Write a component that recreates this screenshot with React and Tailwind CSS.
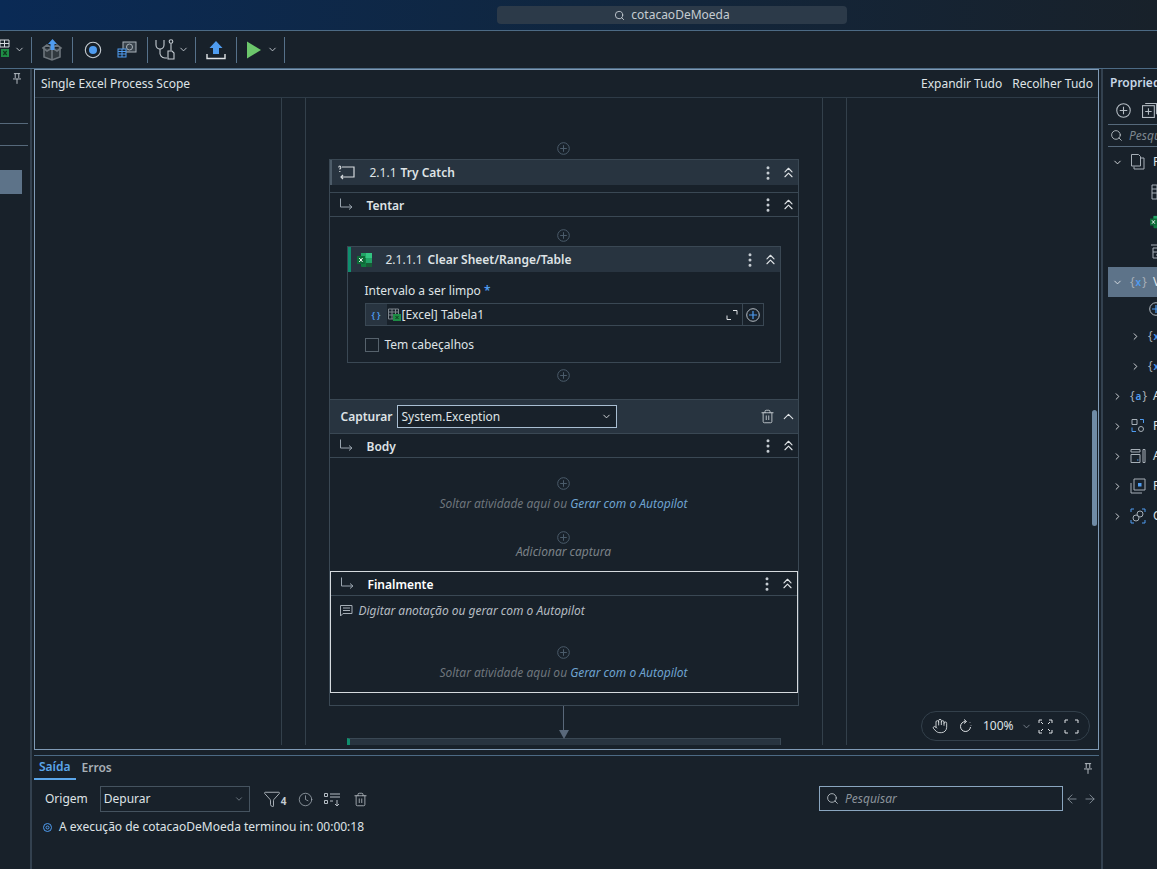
import React from "react";
import { ChevronDown, ChevronRight, ChevronsUp, ChevronUp, EllipsisVertical, Search, Trash2, Hand, ArrowLeft, ArrowRight, Clock, Funnel } from "lucide-react";

function PlusDot({ className = "" }) {
  return (
    <svg width="13" height="13" viewBox="0 0 13 13" fill="none" stroke="#4b5c6b" strokeWidth="1" className={className}>
      <circle cx="6.5" cy="6.5" r="5.8" />
      <path d="M6.5 3.2v6.6M3.2 6.5h6.6" />
    </svg>
  );
}

function PinIcon({ className = "" }) {
  return (
    <svg width="8" height="11" viewBox="0 0 9 12" fill="none" stroke="#c5ccd2" className={className}>
      <path d="M1 .5h7M2.500 .5v5M6.500 .5v5M0 6.500h9M4.500 6.500V12" />
    </svg>
  );
}

function ExcelIcon({ size = 16 }) {
  return (
    <svg width={size} height={size} viewBox="0 0 16 16">
      <rect x="4" y="1" width="11" height="14" rx="1" fill="#107c41" />
      <rect x="9" y="1" width="6" height="5" fill="#33c481" />
      <rect x="9" y="6" width="6" height="5" fill="#21a366" />
      <rect x="4" y="1" width="5" height="5" fill="#21a366" />
      <rect x="9" y="11" width="6" height="4" fill="#185c37" />
      <rect x="0" y="4" width="8" height="8" fill="#0e6b38" />
      <path d="M2.2 6l3.4 4M5.6 6l-3.4 4" stroke="#fff" strokeWidth="1" />
    </svg>
  );
}

function BranchIcon() {
  return (
    <svg width="14" height="13" viewBox="0 0 14 13" fill="none" stroke="#9aa5af" strokeWidth="1" className="shrink-0">
      <path d="M0.5 0.5v8.5h11M9 6.5l3 2.5-3 2.5" />
    </svg>
  );
}

function RowActions() {
  return (
    <div className="ml-auto flex items-center gap-[3px]">
      <EllipsisVertical size={18} strokeWidth={2} className="text-[#c5ccd2]" />
      <ChevronsUp size={17} strokeWidth={1.6} className="text-[#dfe3e6]" />
    </div>
  );
}

function SectionRow({ title, white }) {
  return (
    <div className="flex h-6 shrink-0 items-center border-b border-[#3a4854] pl-[10px] pr-[1px]">
      <BranchIcon />
      <span className={`ml-[13px] pt-[2px] font-semibold ${white ? "text-white" : "text-[#dfe3e6]"}`}>{title}</span>
      <RowActions />
    </div>
  );
}

function DropHint() {
  return (
    <div className="flex flex-col items-center gap-[6px] italic text-[#6e767d]">
      <PlusDot />
      <div>
        Soltar atividade aqui ou <span className="text-[#6ea3d0]">Gerar com o Autopilot</span>
      </div>
    </div>
  );
}

function Toolbar() {
  return (
    <div className="flex h-[37px] shrink-0 items-center">
      <svg width="26" height="26" viewBox="0 0 26 26" fill="none" className="-ml-[2px]">
        <path d="M2 3h9v7H2zM6.500 3v7M2 6.500h9" stroke="#d5dade" strokeWidth="1" />
        <rect x="3" y="12" width="8" height="8" fill="#1e8c45" />
        <path d="M5.300 14l3.400 4M8.700 14l-3.400 4" stroke="#10331d" strokeWidth="1.2" />
      </svg>
      <ChevronDown size={11} strokeWidth={2} className="text-[#c5ccd2] -ml-[10px] mr-[6px]" />
      <div className="h-[26px] w-px bg-[#56718a]" />
      <svg width="24" height="24" viewBox="0 0 24 24" fill="none" className="mx-[8px]">
        <path d="M4 10v9l8 3 8-3v-9" stroke="#6d757c" strokeWidth="1.6" fill="#31393f" />
        <path d="M3 10l4-3 5 3 5-3 4 3-4 3-5-3-5 3zM12 12v10" stroke="#6d757c" strokeWidth="1.6" />
        <path d="M10.500 12V6H8l4.500-5L17 6h-2.500v6z" fill="#4f9cf0" />
      </svg>
      <div className="h-[26px] w-px bg-[#56718a]" />
      <svg width="18" height="18" viewBox="0 0 18 18" fill="none" className="ml-[11px]">
        <circle cx="9" cy="9" r="7.7" stroke="#c5ccd2" strokeWidth="1.1" />
        <circle cx="9" cy="9" r="4" fill="#4f9cf0" />
      </svg>
      <svg width="20" height="18" viewBox="0 0 20 18" fill="none" className="ml-[15px]">
        <rect x="6" y="1" width="13" height="10" fill="#39434c" stroke="#aab3ba" />
        <circle cx="12.5" cy="6" r="3" stroke="#aab3ba" />
        <rect x="1" y="8" width="8" height="8" fill="#18212a" stroke="#4f9cf0" />
        <path d="M1 10.500h8M1 13h8M5 8v8" stroke="#4f9cf0" />
      </svg>
      <div className="ml-[10px] h-[26px] w-px bg-[#56718a]" />
      <svg width="24" height="22" viewBox="0 0 24 22" fill="none" className="ml-[6px]" stroke="#c5ccd2" strokeWidth="1.1">
        <path d="M2 1v5a4 4 0 0 0 8 0V1" />
        <path d="M6 10v3a5 5 0 0 0 5 6h2" />
        <circle cx="17" cy="2.500" r="1.800" />
        <path d="M17 4.500v7" />
        <path d="M14 12h4l2 2v6h-6z" />
      </svg>
      <ChevronDown size={11} strokeWidth={2} className="text-[#c5ccd2]" />
      <div className="ml-[6px] h-[26px] w-px bg-[#56718a]" />
      <svg width="20" height="20" viewBox="0 0 20 20" fill="none" className="ml-[10px]">
        <path d="M10 1l6.500 7H13v6H7V8H3.500z" fill="#4f9cf0" />
        <path d="M1 14v4.500h18V14" stroke="#dfe3e6" strokeWidth="1.400" />
      </svg>
      <div className="ml-[10px] h-[26px] w-px bg-[#56718a]" />
      <svg width="16" height="20" viewBox="0 0 16 20" className="ml-[9px]">
        <path d="M1 1.500L15 10 1 18.500z" fill="#6cc76c" />
      </svg>
      <ChevronDown size={11} strokeWidth={2} className="text-[#c5ccd2] ml-[5px]" />
      <div className="ml-[6px] h-[26px] w-px bg-[#56718a]" />
    </div>
  );
}

function TreeRow({ indent, chevron, icon, label, active }) {
  return (
    <div className={`flex h-[30px] items-center whitespace-nowrap ${active ? "bg-[#5d7389]" : ""}`} style={{ paddingLeft: indent }}>
      <span className="flex w-[18px] shrink-0 justify-start">
        {chevron === "down" && <ChevronDown size={11} strokeWidth={2} className="text-[#dfe3e6]" />}
        {chevron === "right" && <ChevronRight size={11} strokeWidth={2} className="text-[#dfe3e6]" />}
      </span>
      <span className="flex w-[23px] shrink-0 items-center">{icon}</span>
      <span className="text-[#dfe3e6]">{label}</span>
    </div>
  );
}

function Braces({ letter }) {
  return (
    <span className="flex items-center gap-[1px] text-[12px] leading-none text-[#a6afb7]">
      {"{"}<span className="text-[10px] font-semibold text-[#4f9cf0]">{letter}</span>{"}"}
    </span>
  );
}

function Outline({ children }) {
  return (
    <svg width="16" height="16" viewBox="0 0 16 16" fill="none" stroke="#a6afb7" strokeWidth="1">
      {children}
    </svg>
  );
}

function RightPanel() {
  return (
    <div className="flex w-[54px] shrink-0 flex-col overflow-hidden whitespace-nowrap">
      <div className="flex h-[27px] w-[200px] shrink-0 items-center pl-[7px] font-semibold text-[#c6d6e6]">Propriedades do projeto</div>
      <div className="flex h-[28px] w-[200px] shrink-0 items-center gap-[11px] pl-[13px]">
        <svg width="15" height="15" viewBox="0 0 14 14" fill="none" stroke="#b5bdc4">
          <circle cx="7" cy="7" r="6.300" /><path d="M7 3.500v7M3.500 7h7" />
        </svg>
        <svg width="15" height="15" viewBox="0 0 14 14" fill="none" stroke="#b5bdc4">
          <rect x="0.500" y="2.500" width="11" height="11" /><path d="M3 .5h10.500v10M6 5v6M3 8h6" />
        </svg>
      </div>
      <div className="ml-[5px] flex h-[23px] w-[200px] shrink-0 items-center gap-[6px] border-y border-[#56697b] pl-[2px]">
        <Search size={13} strokeWidth={1.500} className="text-[#c5ccd2]" />
        <span className="italic text-[#7d868e]">Pesquisar</span>
      </div>
      <div className="ml-[5px] w-[200px]">
        <TreeRow indent={4} chevron="down" label="Projeto" icon={<Outline><path d="M1.500 .5h7l2 2v9.500h-9zM4 12.500V15h10V4h-3" /></Outline>} />
        <div className="flex h-[30px] items-center pl-[43px]"><Outline><path d="M1 1h10v14H1zM1 5h10M1 9h10M6 1v14" /></Outline></div>
        <div className="flex h-[30px] items-center pl-[42px]"><ExcelIcon size={14} /></div>
        <div className="flex h-[30px] items-center pl-[42px]"><Outline><path d="M1 1h10v2M3 4h10v10H3zM3 8h10M6 11h5" /></Outline></div>
        <TreeRow indent={4} chevron="down" label="Variáveis" active icon={<Braces letter="x" />} />
        <div className="flex h-[24px] items-center pl-[41px]">
          <svg width="14" height="14" viewBox="0 0 14 14" fill="none">
            <circle cx="7" cy="7" r="6.300" stroke="#b5bdc4" /><path d="M7 3v8M3 7h8" stroke="#4f9cf0" strokeWidth="1.200" />
          </svg>
        </div>
        <TreeRow indent={22} chevron="right" label="" icon={<Braces letter="x" />} />
        <TreeRow indent={22} chevron="right" label="" icon={<Braces letter="x" />} />
        <TreeRow indent={4} chevron="right" label="Argumentos" icon={<Braces letter="a" />} />
        <TreeRow indent={4} chevron="right" label="Pacotes" icon={<Outline><path d="M2 1.500h5v5H2z" /><circle cx="11" cy="11" r="2.500" /><path d="M10 1.500h3.500V5M2 9.500v4h4" stroke="#4f9cf0" /></Outline>} />
        <TreeRow indent={4} chevron="right" label="Ativos" icon={<Outline><path d="M1 1.500h9v2.500H1zM1 6.500h9v8H1zM13 1.500h2v13h-2z" /><path d="M7 12h1.500" stroke="#4f9cf0" /></Outline>} />
        <TreeRow indent={4} chevron="right" label="Recursos" icon={<Outline><path d="M4 1h11v11H4zM1 5v10h11" /><rect x="8" y="5" width="3.500" height="3.500" fill="#4f9cf0" stroke="none" /></Outline>} />
        <TreeRow indent={4} chevron="right" label="Objetos" icon={<Outline><circle cx="6" cy="10" r="3" /><circle cx="10" cy="6" r="3" /><path d="M1 4V1h3M12 1h3v3M1 12v3h3M15 12v3h-3" stroke="#4f9cf0" /></Outline>} />
      </div>
    </div>
  );
}

export default function App() {
  return (
    <div className="flex h-[869px] w-[1157px] flex-col overflow-hidden bg-[#18212a] font-['Noto_Sans',sans-serif] text-[12px] leading-[16px] text-[#dfe3e6]">
      {/* title bar */}
      <div className="flex h-[31px] shrink-0 items-center justify-center border-b border-[#4c6a84] bg-gradient-to-r from-[#0a2a55] via-[#10263f] to-[#18212a] pl-[497px] pr-[310px]">
        <div className="flex h-[18px] w-full items-center justify-center gap-[6px] rounded-[4px] bg-[#2c3a49] text-[#c5ccd2]">
          <Search size={11} strokeWidth={2} />
          cotacaoDeMoeda
        </div>
      </div>
      <Toolbar />
      <div className="flex min-h-0 flex-1 border-t border-[#4c6a84]">
        {/* left panel */}
        <div className="flex w-[32px] shrink-0 flex-col border-r-2 border-[#33414f]">
          <div className="flex h-[21px] justify-end pr-[9px] pt-[4px]">
            <PinIcon />
          </div>
          <div className="mr-[2px] mt-[33px] h-[23px] border-y border-[#56697b]" />
          <div className="mr-[8px] mt-[24px] h-[24px] bg-[#5d7389]" />
        </div>
        <div className="flex min-w-0 flex-1 flex-col pl-[2px]">
          {/* designer */}
          <div className="relative flex h-[681px] shrink-0 flex-col border border-[#7f9ab5] pb-[4px]">
            <div className="flex h-[28px] shrink-0 items-center border-b border-[#2e3b47] pl-[6px] pr-[5px]">
              <span>Single Excel Process Scope</span>
              <span className="ml-auto mr-[10px]">Expandir Tudo</span>
              <span>Recolher Tudo</span>
            </div>
            <div className="flex min-h-0 flex-1 justify-center overflow-hidden pr-[6px]">
              <div className="w-[566px] border-x border-[#33404b] px-[23px]">
                <div className="h-full border-x border-[#33404b] px-[23px] pt-[44px]">
                  <div className="flex justify-center"><PlusDot /></div>
                  <div className="mt-[4px] w-[470px] border border-[#3a4854] pb-[12px]">
                    <div className="flex h-[25px] items-center border-l-2 border-[#4d5c69] bg-[#283440] pl-[6px] pr-[1px]">
                      <svg width="18" height="16" viewBox="0 0 18 16" fill="none" stroke="#d5dade" strokeWidth="1.200">
                        <path d="M4 2h12v10H3M5 10l-2 2 2 2" />
                        <path d="M0.800 2.500c0-2 2-2 2 0 0 1-1 1-1 2M1.800 6v1" />
                      </svg>
                      <span className="ml-[14px]">2.1.1</span>
                      <span className="ml-[4px] font-semibold">Try Catch</span>
                      <RowActions />
                    </div>
                    <div className="mt-[7px] border-t border-[#3a4854]">
                      <SectionRow title="Tentar" />
                    </div>
                    <div className="flex h-[183px] flex-col items-center border-b border-[#3a4854] pt-[12px]">
                      <PlusDot />
                      <div className="mt-[4px] w-[434px] border border-[#3a4854]">
                        <div className="flex h-[25px] items-center border-l-[3px] border-[#0f8f6e] bg-[#283440] pl-[6px] pr-[1px]">
                          <ExcelIcon />
                          <span className="ml-[13px]">2.1.1.1</span>
                          <span className="ml-[5px] font-semibold">Clear Sheet/Range/Table</span>
                          <RowActions />
                        </div>
                        <div className="pb-[9px] pl-[17px] pr-[16px] pt-[11px]">
                          <div>Intervalo a ser limpo <span className="font-semibold text-[#4f9cf0]">*</span></div>
                          <div className="mt-[4px] flex h-[23px] items-stretch border border-[#3a4854]">
                            <div className="flex w-[21px] items-center justify-center gap-[2px] bg-[#283440] text-[9px] font-semibold text-[#4f9cf0]">
                              <span>{"{"}</span><span>{"}"}</span>
                            </div>
                            <div className="flex flex-1 items-center pl-[1px] pt-[1px]">
                              <svg width="14" height="14" viewBox="0 0 14 14" fill="none">
                                <path d="M0.500 1h10v10h-10zM0.500 4h10M0.500 7h10M4 1v10M7.500 1v10" stroke="#7c858c" />
                                <rect x="5" y="6" width="8" height="7" fill="#1e8c45" />
                                <path d="M7.500 8l3 3M10.500 8l-3 3" stroke="#10331d" />
                              </svg>
                              <span>[Excel] Tabela1</span>
                            </div>
                            <svg width="12" height="12" viewBox="0 0 12 12" fill="none" stroke="#dfe3e6" className="mr-[4px] self-center">
                              <path d="M7 1.500h4v4M1 6.500v4h4" />
                            </svg>
                            <div className="flex w-[21px] items-center justify-center border-l border-[#3a4854]">
                              <svg width="14" height="14" viewBox="0 0 14 14" fill="none">
                                <circle cx="7" cy="7" r="6.300" stroke="#b5bdc4" />
                                <path d="M7 3v8M3 7h8" stroke="#4f9cf0" strokeWidth="1.200" />
                              </svg>
                            </div>
                          </div>
                          <label className="mt-[11px] flex items-center gap-[6px]">
                            <span className="h-[14px] w-[14px] border border-[#56626c]" />
                            Tem cabeçalhos
                          </label>
                        </div>
                      </div>
                      <PlusDot className="mt-[6px]" />
                    </div>
                    <div className="flex h-[34px] items-center border-b border-[#3a4854] bg-[#283440] pl-[11px] pr-[1px]">
                      <span className="font-semibold">Capturar</span>
                      <div className="ml-[5px] flex h-[23px] w-[220px] items-center border border-[#a9bed2] bg-[#18212a] pl-[3px] pr-[4px]">
                        System.Exception
                        <ChevronDown size={11} strokeWidth={2} className="ml-auto" />
                      </div>
                      <div className="ml-auto flex items-center gap-[5px]">
                        <Trash2 size={15} strokeWidth={1.300} className="text-[#d5dade]" />
                        <ChevronUp size={17} strokeWidth={1.600} className="text-[#dfe3e6]" />
                      </div>
                    </div>
                    <SectionRow title="Body" />
                    <div className="flex h-[113px] flex-col items-center pt-[19px]">
                      <DropHint />
                      <PlusDot className="mt-[19px]" />
                      <div className="italic text-[#7b8288]">Adicionar captura</div>
                    </div>
                    <div className="border border-[#d5dade]">
                      <SectionRow title="Finalmente" white />
                      <div className="flex h-[96px] flex-col">
                        <div className="flex h-[29px] shrink-0 items-center gap-[6px] pl-[9px] italic text-[#b5bcc2]">
                          <svg width="13" height="13" viewBox="0 0 13 13" fill="none" stroke="#a6afb7">
                            <path d="M.5 1.500h11.500v8H3L.5 12zM3 4h7M3 6.500h7" />
                          </svg>
                          Digitar anotação ou gerar com o Autopilot
                        </div>
                        <div className="mt-[21px]"><DropHint /></div>
                      </div>
                    </div>
                  </div>
                  <div className="relative z-10 -mb-[1px] flex flex-col items-center">
                    <div className="h-[24px] w-px bg-[#59687a]" />
                    <div className="h-0 w-0 border-x-[5px] border-t-[9px] border-x-transparent border-t-[#59687a]" />
                  </div>
                  <div className="mx-auto flex h-[25px] w-[434px] items-center border border-[#3a4854] border-l-[3px] border-l-[#0f8f6e] bg-[#283440] pl-[7px] pr-[1px] pt-[4px]">
                    <ExcelIcon />
                    <RowActions />
                  </div>
                </div>
              </div>
            </div>
            {/* zoom pill */}
            <div className="absolute bottom-[8px] right-[8px] flex h-[30px] w-[169px] items-center rounded-full border border-[#33404b] bg-[#18212a] pl-[10px] pr-[10px] text-[#dfe3e6]">
              <Hand size={16} strokeWidth={1.300} />
              <svg width="13" height="14" viewBox="0 0 13 14" fill="none" stroke="#dfe3e6" className="ml-[11px]">
                <path d="M6.500 2.500a5 5 0 1 0 5 5.500M5 .5l2.500 2-2.500 2M11 3.500v.5M12 6v.5" />
              </svg>
              <span className="ml-[11px]">100%</span>
              <ChevronDown size={11} strokeWidth={1.500} className="ml-[7px] text-[#9aa5af]" />
              <svg width="15" height="15" viewBox="0 0 15 15" fill="none" stroke="#dfe3e6" className="ml-[6px]">
                <path d="M1 4V1h3M11 1h3v3M14 11v3h-3M4 14H1v-3M3 3l2 2M12 3l-2 2M3 12l2-2M12 12l-2-2" />
              </svg>
              <svg width="15" height="15" viewBox="0 0 15 15" fill="none" stroke="#dfe3e6" className="ml-auto">
                <path d="M1 4V1h3M11 1h3v3M14 11v3h-3M4 14H1v-3" />
              </svg>
            </div>
            {/* scrollbar */}
            <div className="absolute right-[1px] top-[340px] h-[116px] w-[5px] rounded-full bg-[#6f8ba6]" />
          </div>
          {/* output */}
          <div className="mt-[5px] flex min-h-0 flex-1 flex-col border-t border-[#4c6a84]">
            <div className="flex h-[24px] shrink-0 items-center">
              <div className="flex h-full items-center border-b-2 border-[#5ba6ea] px-[5px] font-semibold text-[#5ba6ea]">Saída</div>
              <div className="ml-[6px] font-semibold text-[#a8b0b7]">Erros</div>
              <PinIcon className="ml-auto mr-[7px]" />
            </div>
            <div className="mt-[6px] flex h-[26px] shrink-0 items-center pl-[11px] pr-[2px]">
              <span>Origem</span>
              <div className="ml-[12px] flex h-[26px] w-[150px] items-center border border-[#45535f] pl-[3px] pr-[5px]">
                Depurar
                <ChevronDown size={10} strokeWidth={1.500} className="ml-auto text-[#9aa5af]" />
              </div>
              <Funnel size={18} strokeWidth={1.100} className="ml-[13px] text-[#c5ccd2]" />
              <span className="mt-[4px] text-[10px] font-bold text-[#c5ccd2]">4</span>
              <Clock size={15} strokeWidth={1.200} className="ml-[11px] text-[#a6afb7]" />
              <svg width="17" height="15" viewBox="0 0 17 15" fill="none" stroke="#b5bdc4" className="ml-[11px]">
                <path d="M.5 1.500h3v3h-3zM.5 8.500h3v3h-3zM6 2h10M6 5h10M6 9h3M13 8v6M11 12l2 2 2-2" />
              </svg>
              <Trash2 size={15} strokeWidth={1.200} className="ml-[12px] text-[#c5ccd2]" />
              <div className="ml-auto flex h-[25px] w-[244px] items-center gap-[6px] self-start border border-[#8aa6c0] pl-[6px]">
                <Search size={13} strokeWidth={1.500} className="text-[#c5ccd2]" />
                <span className="italic text-[#8b939a]">Pesquisar</span>
              </div>
              <ArrowLeft size={14} strokeWidth={1.300} className="ml-[2px] text-[#9aa5af]" />
              <ArrowRight size={14} strokeWidth={1.300} className="ml-[4px] text-[#9aa5af]" />
            </div>
            <div className="mt-[7px] flex items-center pl-[9px]">
              <svg width="9" height="9" viewBox="0 0 9 9" fill="none" stroke="#4f9cf0">
                <circle cx="4.500" cy="4.500" r="4" /><circle cx="4.500" cy="4.500" r="1.500" />
              </svg>
              <span className="ml-[7px]">A execução de cotacaoDeMoeda terminou in: 00:00:18</span>
            </div>
          </div>
        </div>
        <div className="ml-[2px] w-[2px] shrink-0 bg-[#33414f]" />
        <RightPanel />
      </div>
    </div>
  );
}
